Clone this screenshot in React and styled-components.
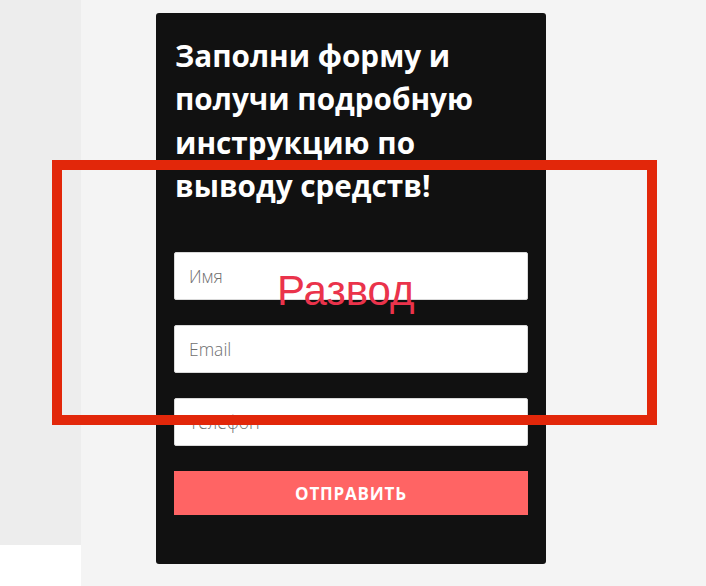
import React from "react";
import styled, { createGlobalStyle } from "styled-components";

const GlobalStyle = createGlobalStyle`
  html, body {
    margin: 0;
    padding: 0;
    background: #f4f4f4;
  }
  body {
    font-family: "Open Sans", Arial, sans-serif;
  }
`;

const Page = styled.div`
  position: relative;
  display: flex;
  width: 706px;
  height: 586px;
  overflow: hidden;
`;

const Sidebar = styled.div`
  width: 81px;
  display: flex;
  flex-direction: column;
`;

const SidebarTop = styled.div`
  height: 545px;
  background: #ededed;
`;

const SidebarBottom = styled.div`
  flex: 1;
  background: #ffffff;
`;

const Main = styled.div`
  flex: 1;
  background: #f4f4f4;
  padding: 13px 0 0 75px;
`;

const Card = styled.form`
  box-sizing: border-box;
  width: 390px;
  height: 551px;
  background: #111111;
  border-radius: 3px;
  padding: 21px 18px 0 18px;
  display: flex;
  flex-direction: column;
`;

const Title = styled.h2`
  margin: 0 0 45px 1px;
  color: #ffffff;
  font-family: "Open Sans", Arial, sans-serif;
  font-weight: 700;
  font-size: 29.7px;
  line-height: 43.3px;
`;

const Fields = styled.div`
  display: flex;
  flex-direction: column;
  gap: 25px;
`;

const Field = styled.input`
  box-sizing: border-box;
  width: 354px;
  height: 48px;
  margin: 0;
  padding: 0 14px;
  border: 1px solid #d9d9d9;
  border-radius: 2px;
  background: #ffffff;
  font-family: "Open Sans", Arial, sans-serif;
  font-size: 17.5px;
  color: #333;
  outline: none;

  &::placeholder {
    color: #6f6f6f;
    font-weight: 300;
  }
`;

const SubmitButton = styled.button`
  box-sizing: border-box;
  width: 354px;
  height: 44px;
  margin: 0;
  border: none;
  border-radius: 0;
  background: #ff6464;
  color: #ffffff;
  font-family: "Open Sans", Arial, sans-serif;
  font-weight: 700;
  font-size: 17px;
  letter-spacing: 0.8px;
  text-transform: uppercase;
  cursor: pointer;
`;

const Frame = styled.div`
  position: absolute;
  left: 52px;
  top: 160px;
  width: 605px;
  height: 265px;
  box-sizing: border-box;
  border: 10px solid #e2270a;
  pointer-events: none;
`;

const Stamp = styled.div`
  position: absolute;
  left: 277px;
  top: 270px;
  font-family: "Liberation Sans", Arial, sans-serif;
  font-size: 42px;
  line-height: 1;
  color: #ea334b;
  pointer-events: none;
`;

export default function App() {
  return (
    <Page>
      <GlobalStyle />
      <Sidebar>
        <SidebarTop />
        <SidebarBottom />
      </Sidebar>
      <Main>
        <Card onSubmit={(e) => e.preventDefault()}>
          <Title>
            Заполни форму и
            <br />
            получи подробную
            <br />
            инструкцию по
            <br />
            выводу средств!
          </Title>
          <Fields>
            <Field type="text" placeholder="Имя" />
            <Field type="email" placeholder="Email" />
            <Field type="tel" placeholder="Телефон" />
            <SubmitButton type="submit">Отправить</SubmitButton>
          </Fields>
        </Card>
      </Main>
      <Frame />
      <Stamp>Развод</Stamp>
    </Page>
  );
}
